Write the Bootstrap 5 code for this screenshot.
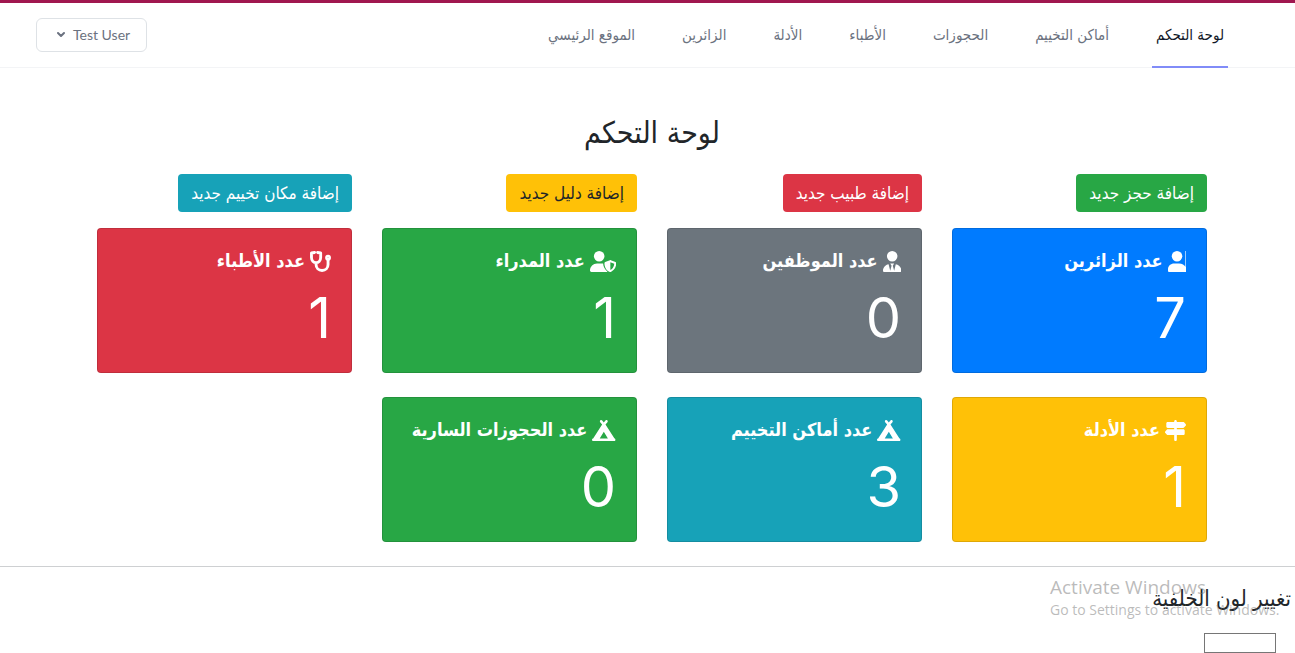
<!DOCTYPE html>
<html lang="ar" dir="rtl">
<head>
<meta charset="utf-8">
<meta name="viewport" content="width=device-width, initial-scale=1">
<title>لوحة التحكم</title>
<link href="https://cdn.jsdelivr.net/npm/bootstrap@5.3.0/dist/css/bootstrap.min.css" rel="stylesheet">
<style>
body{font-family:"DejaVu Sans Condensed",sans-serif;background:#fff;color:#212529}
.topbar{border-top:3px solid #a0174f;border-bottom:1px solid #f3f4f6;padding-right:67px;padding-left:36px}
.main-menu{gap:39px}
.menu-link{display:flex;align-items:center;height:65px;padding:2px 4px 0;margin-bottom:-1px;border-bottom:2px solid transparent;font-size:15px;color:#6b7280;text-decoration:none;white-space:nowrap}
.menu-link.active{border-color:#818cf8;color:#111827}
.user-btn{height:34px;padding:0 16px 2px 20px;border:1px solid #dee2e6;border-radius:6px;background:#fff;color:#6b7280;font:14px Lato,sans-serif}
.page{padding-left:9px}
.page .container{--bs-gutter-x:30px}
.page .row{--bs-gutter-x:30px}
.page h1{font-size:30px;line-height:38px;margin:46px 0 22px}
.btn-add{--bs-btn-border-radius:4px;height:38px;font-size:17px;line-height:24px;border:0;padding:7px 13px;color:#fff}
.btn-add:hover{color:#fff}
.btn-add.ink,.btn-add.ink:hover{color:#212529}
.c-green{background:#28a745}.c-red{background:#dc3545}.c-yellow{background:#ffc107}.c-teal{background:#17a2b8}.c-blue{background:#007bff}.c-gray{background:#6c757d}
.stat{--bs-card-border-radius:4px;--bs-card-border-color:rgba(0,0,0,.125);color:#fff}
.stat .card-body{padding:20px}
.stat h2{font-size:18px;line-height:24px;font-weight:600;gap:5px;margin:0 0 12px;white-space:nowrap}
.stat svg{height:21px;fill:currentColor;flex:none}
.count{font-family:Inter,sans-serif;font-size:56px;line-height:67px;margin:0}
.rule{margin:0;border-color:#c9cbcd;opacity:.9}
.tint h2{font-size:22px;line-height:28px;margin:18px 0 20px}
.tint input{width:72px;height:20px;border:1px solid #767676;padding:0;margin-right:15px;display:block}
.notice{position:absolute;left:1050px;top:574px;color:rgba(120,120,120,.5);font-family:"Open Sans",sans-serif;white-space:nowrap;pointer-events:none}
.notice b{display:block;font-weight:400;font-size:19px;line-height:26px}
.notice span{display:block;font-size:14px;line-height:20px}
</style>
</head>
<body>
<svg class="d-none" xmlns="http://www.w3.org/2000/svg">
<symbol id="i-shield" viewBox="0 0 640 512"><circle cx="224" cy="128" r="128"/><path d="M275 304H173C78 304 0 382 0 477c0 19 16 35 35 35h378c6 0 11-2 16-4-61-53-109-123-109-201v-2c-15-1-30-1-45-1z"/><path fill-rule="evenodd" d="M622 271l-115-47c-7-3-16-3-22 0l-115 47c-11 5-18 15-18 27 0 120 71 192 132 212 8 3 16 3 24 0 48-16 132-82 132-212 0-12-7-22-18-27zM496 462V273l96 39c-6 86-57 133-96 150z"/></symbol>
<symbol id="i-tie" viewBox="0 0 448 512"><path d="M352 128A128 128 0 1 1 96 128A128 128 0 1 1 352 128zM209 359L176 304H272L239 359L272 483L312 322C389 334 448 401 448 481C448 498 434 512 417 512H31C14 512 0 498 0 481C0 401 59 334 136 322L176 483L209 359z"/></symbol>
<symbol id="i-user" viewBox="0 0 448 512"><circle cx="220" cy="128" r="128"/><path d="M448 0h-24v512h24zM270 304H150C67 304 0 361 0 445v37c0 17 14 30 30 30h404V400c-30-60-94-96-164-96z"/></symbol>
<symbol id="i-steth" viewBox="0 0 512 512"><path d="M112 36L36 48V160c0 70 50 124 112 124s112-54 112-124V48L184 36M148 290v40c0 84 60 146 146 146s146-62 146-146v-140" fill="none" stroke="currentColor" stroke-width="70" stroke-linecap="round" stroke-linejoin="round"/><circle cx="440" cy="164" r="44" fill="none" stroke="currentColor" stroke-width="54"/></symbol>
<symbol id="i-tent" viewBox="0 0 576 512"><path fill-rule="evenodd" d="M377 52c11-14 9-34-5-45s-34-9-45 5L288 61 249 12c-11-14-31-16-45-5s-16 31-5 45l48 60L28 448c-16 0-28 14-28 32s14 32 32 32H544c18 0 32-14 32-32s-12-32-28-32L329 112l48-60zM288 448H188L288 284 388 448H288z"/></symbol>
<symbol id="i-sign" viewBox="0 0 512 512"><path d="M224 32c0-18 14-32 32-32s32 14 32 32v16h153c9 0 17 3 23 9l39 40c12 13 12 33 0 46l-39 40c-6 6-14 9-23 9H64c-18 0-32-14-32-32V80c0-18 14-32 32-32h160zM480 256v80c0 18-14 32-32 32H71c-9 0-17-3-23-9L9 319c-12-13-12-33 0-46l39-40c6-6 14-9 23-9h153v-32h64v32h160c18 0 32 14 32 32zM288 368v112c0 18-14 32-32 32s-32-14-32-32V368z"/></symbol>
</svg>

<header class="topbar d-flex justify-content-between align-items-center">
  <nav class="main-menu d-flex" aria-label="القائمة">
    <a class="menu-link active" href="#">لوحة التحكم</a>
    <a class="menu-link" href="#">أماكن التخييم</a>
    <a class="menu-link" href="#">الحجوزات</a>
    <a class="menu-link" href="#">الأطباء</a>
    <a class="menu-link" href="#">الأدلة</a>
    <a class="menu-link" href="#">الزائرين</a>
    <a class="menu-link" href="#">الموقع الرئيسي</a>
  </nav>
  <button class="user-btn d-flex align-items-center gap-2" type="button">Test User
    <svg width="8" height="8" viewBox="0 0 8 8" fill="none" stroke="currentColor" stroke-width="2" stroke-linecap="round" stroke-linejoin="round"><path d="M1 3l3 3 3-3"/></svg>
  </button>
</header>

<main class="page">
  <div class="container">
    <h1 class="text-center">لوحة التحكم</h1>
    <div class="row">
      <div class="col-3 mb-3"><button type="button" class="btn btn-add c-green">إضافة حجز جديد</button></div>
      <div class="col-3 mb-3"><button type="button" class="btn btn-add c-red">إضافة طبيب جديد</button></div>
      <div class="col-3 mb-3"><button type="button" class="btn btn-add c-yellow ink">إضافة دليل جديد</button></div>
      <div class="col-3 mb-3"><button type="button" class="btn btn-add c-teal">إضافة مكان تخييم جديد</button></div>
    </div>
    <div class="row">
      <div class="col-3 mb-4"><div class="card stat c-blue"><div class="card-body"><h2 class="d-flex align-items-center"><svg viewBox="0 0 448 512"><use href="#i-user"/></svg>عدد الزائرين</h2><p class="count">7</p></div></div></div>
      <div class="col-3 mb-4"><div class="card stat c-gray"><div class="card-body"><h2 class="d-flex align-items-center"><svg viewBox="0 0 448 512"><use href="#i-tie"/></svg>عدد الموظفين</h2><p class="count">0</p></div></div></div>
      <div class="col-3 mb-4"><div class="card stat c-green"><div class="card-body"><h2 class="d-flex align-items-center"><svg viewBox="0 0 640 512"><use href="#i-shield"/></svg>عدد المدراء</h2><p class="count">1</p></div></div></div>
      <div class="col-3 mb-4"><div class="card stat c-red"><div class="card-body"><h2 class="d-flex align-items-center"><svg viewBox="0 0 512 512"><use href="#i-steth"/></svg>عدد الأطباء</h2><p class="count">1</p></div></div></div>
      <div class="col-3 mb-4"><div class="card stat c-yellow"><div class="card-body"><h2 class="d-flex align-items-center"><svg viewBox="0 0 512 512"><use href="#i-sign"/></svg>عدد الأدلة</h2><p class="count">1</p></div></div></div>
      <div class="col-3 mb-4"><div class="card stat c-teal"><div class="card-body"><h2 class="d-flex align-items-center"><svg viewBox="0 0 576 512"><use href="#i-tent"/></svg>عدد أماكن التخييم</h2><p class="count">3</p></div></div></div>
      <div class="col-3 mb-4"><div class="card stat c-green"><div class="card-body"><h2 class="d-flex align-items-center"><svg viewBox="0 0 576 512"><use href="#i-tent"/></svg>عدد الحجوزات السارية</h2><p class="count">0</p></div></div></div>
    </div>
  </div>
</main>
<hr class="rule">
<section class="tint px-1">
  <h2><label for="bg">تغيير لون الخلفية</label></h2>
  <input id="bg" type="text">
</section>
<aside class="notice" dir="ltr"><b>Activate Windows</b><span>Go to Settings to activate Windows.</span></aside>
<script src="https://cdn.jsdelivr.net/npm/bootstrap@5.3.0/dist/js/bootstrap.bundle.min.js"></script>
</body>
</html>
